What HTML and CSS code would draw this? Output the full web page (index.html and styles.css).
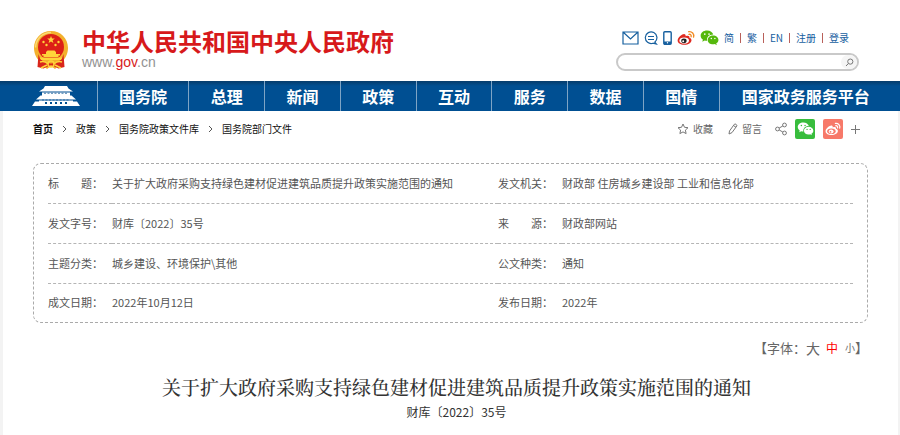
FILE: index.html
```html
<!DOCTYPE html>
<html lang="zh-CN">
<head>
<meta charset="utf-8">
<meta name="viewport" content="width=device-width, initial-scale=1">
<title>关于扩大政府采购支持绿色建材促进建筑品质提升政策实施范围的通知</title>
<link rel="stylesheet" href="styles.css">
</head>
<body>
<svg class="symbols" aria-hidden="true">
  <symbol id="wechat" viewBox="0 0 20 17">
    <path d="M7.4.5C3.5.5.6 2.9.6 6c0 1.800 1 3.200 2.400 4.200L2.400 12.400 4.900 11.100c.8.300 1.700.4 2.600.4-.8-3.600 2.300-6.700 6.500-6.600C13.400 2.300 10.800.5 7.400.5z"/>
    <path d="M13.800 5.800c-3.200 0-5.700 2.100-5.700 4.700s2.500 4.700 5.700 4.700c.7 0 1.300-.1 1.900-.3l2 1.200-.5-1.900c1.400-.9 2.300-2.200 2.300-3.700 0-2.600-2.500-4.700-5.700-4.700z"/>
    <g fill="var(--eye)"><circle cx="5" cy="4.300" r=".9"/><circle cx="9.500" cy="4.300" r=".9"/><circle cx="11.900" cy="9" r=".8"/><circle cx="15.700" cy="9" r=".8"/></g>
  </symbol>
  <symbol id="weibo" viewBox="0 0 20 17">
    <path d="M8.400 4.200C6.600 3.400 1 7.600.7 11c-.3 3 3.300 5.100 7.400 5.100 4.600 0 8-2.600 8-5.100 0-1.600-1.300-2.400-2.400-2.700.6-1.700-.9-3-4.100-1.800.3-1-.1-2-1.200-2.300z"/>
    <ellipse cx="8" cy="11.400" rx="5.300" ry="3.500" fill="var(--eye)"/>
    <ellipse cx="7.700" cy="11.600" rx="3" ry="2.600" fill="var(--iris)"/>
    <circle cx="6.900" cy="12" r="1.100" fill="var(--eye)"/>
    <g fill="none" stroke="var(--wave)" stroke-width="1.500" stroke-linecap="round"><path d="M13 1.500c3.600-.6 6.400 2.500 5.400 6"/><path d="M13.300 4.400c1.700-.3 2.900 1.100 2.400 2.700"/></g>
  </symbol>
</svg>

<header class="masthead">
  <a class="brand" href="#">
    <svg class="emblem" viewBox="0 0 36 40" aria-hidden="true">
      <path d="M18 1C8.200 1 1 8.400 1 18c0 5.700 2.500 10.500 6.200 13.600L6 37l5-1 3 3 4-3 4 3 3-3 5 1-1.200-5.400C32.500 28.500 35 23.700 35 18 35 8.400 27.800 1 18 1z" fill="#f3b12d"/>
      <path d="M18 2.500C9.500 2.500 2.800 9 2.600 17.500" fill="none" stroke="#fbd977" stroke-width="1.500"/>
      <circle cx="18" cy="17" r="13" fill="#dc1f17"/>
      <path d="M5.500 24c1.500 6 6 9.500 12.500 9.500S29 30 30.500 24l1 13-6 1.500L18 35l-7.500 3.500-6-1.500z" fill="#d9261b"/>
      <path d="m18 6 1 2.600h2.800l-2.200 1.700.8 2.700-2.400-1.600-2.400 1.600.8-2.700-2.200-1.700H17z" fill="#ffd43a"/>
      <g fill="#ffd43a"><circle cx="10.500" cy="12" r="1.200"/><circle cx="13.500" cy="15" r="1.200"/><circle cx="22.500" cy="15" r="1.200"/><circle cx="25.500" cy="12" r="1.200"/></g>
      <path d="m13 22 1.500-1.500h7L23 22v2h4v1.500h-1.500V27h-15v-1.500H9V24h4zM6.500 27.500h23L28 30H8z" fill="#ffd43a"/>
      <g fill="none" stroke="#ffd43a" stroke-width="1.500"><circle cx="18" cy="34" r="3"/><path d="M7 32c3-1 6 0 8 2M29 32c-3-1-6 0-8 2M8 38l6-3M28 38l-6-3"/></g>
    </svg>
    <span class="brand-text">
      <span class="brand-name">中华人民共和国中央人民政府</span>
      <span class="brand-url">www.<b>gov</b>.cn</span>
    </span>
  </a>
  <div class="tools">
    <nav class="links" aria-label="快捷入口">
      <a href="#" aria-label="邮箱"><svg width="17" height="14" viewBox="0 0 17 14" fill="none" stroke="#17609f" stroke-width="1.200"><path d="M1 1h15v12H1zM1 1l7.500 7L16 1"/></svg></a>
      <a href="#" aria-label="留言"><svg width="14" height="14" viewBox="0 0 14 14" fill="none" stroke="#17609f" stroke-width="1.200"><path d="M10.800 11.200A5.800 5.800 0 1 0 9 12.200l3.300.8zM4 5.500h6M4 8.500h6"/></svg></a>
      <a href="#" aria-label="手机"><svg width="9" height="14" viewBox="0 0 9 14"><rect x=".8" y=".8" width="7.400" height="12.400" rx="1" fill="#fff" stroke="#17609f" stroke-width="1.400"/><path d="M1 10.500h7V13H1z" fill="#17609f"/><circle cx="4.500" cy="11.800" r=".7" fill="#fff"/></svg></a>
      <a href="#" aria-label="微博"><svg class="weibo-color" width="18" height="16"><use href="#weibo"/></svg></a>
      <a href="#" aria-label="微信"><svg class="wechat-color" width="19" height="16"><use href="#wechat"/></svg></a>
      <span class="langs"><a href="#">简</a><i></i><a href="#">繁</a><i></i><a href="#">EN</a><i></i><a href="#">注册</a><i></i><a href="#">登录</a></span>
    </nav>
    <form class="search" role="search">
      <input type="search" aria-label="搜索">
      <button type="button" aria-label="搜索"><svg width="9" height="9" viewBox="0 0 9 9" fill="none" stroke="#777" stroke-width="1"><circle cx="5.300" cy="3.600" r="2.600"/><path d="M3.400 5.500 1 8"/></svg></button>
    </form>
  </div>
</header>

<nav class="mainnav" aria-label="主导航">
  <a href="#" aria-label="首页"><svg width="50" height="21" viewBox="0 0 50 21" fill="#fff"><path d="M14 0h22l1.500 2.500L42 5.500H8l4.500-3zM11 6.500h28v3H11zM9.500 9.500h31L45 13.500H5zM8 14.500h34v1.200H8zM4 15.500h42l3 4.500H1z"/><path d="M13 7.300h24M11 14h28" stroke="#004f92" stroke-width=".7" stroke-dasharray="2 1.500"/><path d="M14 18v-2h2v2zM19 18v-2h2v2zM24 18v-2h2v2zM29 18v-2h2v2zM34 18v-2h2v2z" fill="#004f92"/></svg></a>
  <a href="#">国务院</a>
  <a href="#">总理</a>
  <a href="#">新闻</a>
  <a href="#">政策</a>
  <a href="#">互动</a>
  <a href="#">服务</a>
  <a href="#">数据</a>
  <a href="#">国情</a>
  <a href="#">国家政务服务平台</a>
</nav>

<main class="page">
  <div class="bar">
    <nav class="crumbs" aria-label="面包屑">
      <a href="#"><b>首页</b></a><svg width="5" height="8" viewBox="0 0 5 8"><path d="m1 1 3 3-3 3"/></svg>
      <a href="#">政策</a><svg width="5" height="8" viewBox="0 0 5 8"><path d="m1 1 3 3-3 3"/></svg>
      <a href="#">国务院政策文件库</a><svg width="5" height="8" viewBox="0 0 5 8"><path d="m1 1 3 3-3 3"/></svg>
      <a href="#">国务院部门文件</a>
    </nav>
    <div class="actions">
      <button type="button" class="action"><svg width="12" height="12" viewBox="0 0 12 12"><path d="m6 1 1.500 3.300 3.500.4-2.600 2.400.7 3.500L6 8.900l-3.100 1.700.7-3.500L1 4.700l3.500-.4z"/></svg>收藏</button>
      <button type="button" class="action"><svg width="10" height="12" viewBox="0 0 10 12"><path d="m1 11 .5-3L6.300 1.300c.8-1 3.200.6 2.500 1.700L4 9.600zM5.500 2.500 8 4.300"/></svg>留言</button>
      <div class="share">
        <svg class="share-icon" width="12" height="14" viewBox="0 0 12 14" role="img" aria-label="分享"><circle cx="2.500" cy="7" r="1.900"/><circle cx="9.500" cy="3" r="1.900"/><circle cx="9.500" cy="11" r="1.900"/><path d="m4.200 6 3.600-2M4.200 8l3.600 2"/></svg>
        <button type="button" class="tile tile-wechat" aria-label="分享到微信"><svg width="17" height="14"><use href="#wechat"/></svg></button>
        <button type="button" class="tile tile-weibo" aria-label="分享到微博"><svg width="16" height="14"><use href="#weibo"/></svg></button>
        <button type="button" class="more" aria-label="更多"><svg width="9" height="9" viewBox="0 0 9 9"><path d="M4.500 0v9M0 4.500h9"/></svg></button>
      </div>
    </div>
  </div>

  <div class="info">
    <table>
      <tbody>
        <tr><th scope="row"><span class="spread"><span>标</span><span>题：</span></span></th><td>关于扩大政府采购支持绿色建材促进建筑品质提升政策实施范围的通知</td><th scope="row">发文机关：</th><td>财政部 住房城乡建设部 工业和信息化部</td></tr>
        <tr><th scope="row">发文字号：</th><td>财库〔2022〕35号</td><th scope="row"><span class="spread"><span>来</span><span>源：</span></span></th><td>财政部网站</td></tr>
        <tr><th scope="row">主题分类：</th><td>城乡建设、环境保护\其他</td><th scope="row">公文种类：</th><td>通知</td></tr>
        <tr><th scope="row">成文日期：</th><td>2022年10月12日</td><th scope="row">发布日期：</th><td>2022年</td></tr>
      </tbody>
    </table>
  </div>

  <div class="sizes">【字体：<button type="button" class="large">大</button><button type="button" class="medium">中</button><button type="button" class="small">小</button>】</div>

  <article>
    <h1>关于扩大政府采购支持绿色建材促进建筑品质提升政策实施范围的通知</h1>
    <p class="docno">财库〔2022〕35号</p>
  </article>
</main>
</body>
</html>
```
FILE: styles.css
```css
* { box-sizing: border-box; }

body {
  margin: 0;
  background: #f3f3f3;
  color: #333;
  font: 10px/16px "Noto Sans CJK SC", sans-serif;
}

a { color: inherit; text-decoration: none; }
button { padding: 0; border: 0; background: none; color: inherit; font: inherit; cursor: pointer; }
svg { display: block; }
.symbols { position: absolute; width: 0; height: 0; }

.masthead {
  display: flex;
  justify-content: space-between;
  padding: 28px 41px 10px 33px;
  background: #fff;
}
.brand { display: flex; gap: 13px; }
.emblem { width: 36px; height: 40px; margin-top: 2px; }
.brand-text { display: flex; flex-direction: column; }
.brand-name { color: #d7191b; font-size: 24px; font-weight: 700; line-height: 26px; white-space: nowrap; }
.brand-url { color: #929292; font: 14px/16px "Liberation Sans", sans-serif; }
.brand-url b { color: #d7191b; font-weight: 400; }

.tools { width: 243px; }
.links { display: flex; align-items: center; height: 20px; gap: 5px; padding-left: 6px; }
.weibo-color { fill: #df2a20; --eye: #fff; --iris: #222; --wave: #f28a22; }
.wechat-color { fill: #55b80c; --eye: #fff; }
.langs { display: flex; flex: 1; align-items: center; justify-content: space-between; padding-right: 10px; color: #17609f; }
.langs i { width: 1px; height: 10px; background: #b9605a; }

.search {
  display: flex;
  align-items: center;
  height: 18px;
  margin-top: 5px;
  border: 2px solid #c9c9c9;
  border-radius: 9px;
  overflow: hidden;
}
.search input { flex: 1; min-width: 0; height: 14px; border: 0; outline: 0; padding: 0 8px; background: none; font: inherit; }
.search button { display: grid; place-items: center; width: 16px; height: 14px; background: #f5f5f5; border-radius: 7px; }

.mainnav {
  display: grid;
  grid-template-columns: 98fr 92fr repeat(7, 76fr) 181fr;
  height: 30px;
  background: linear-gradient(#063c6b, #004f92 5px);
  color: #fff;
  font-size: 16px;
  font-weight: 700;
}
.mainnav a { display: grid; place-items: center; border-right: 1px solid #7ea4c5; white-space: nowrap; }
.mainnav a:first-child { padding-left: 16px; }
.mainnav a:last-child { border-right: 0; padding-right: 8px; }

.page { margin: 0 2px 0 3px; padding: 0 30px 24px; background: #fff; }

.bar { display: flex; justify-content: space-between; align-items: center; height: 36px; }
.crumbs { display: flex; align-items: center; gap: 9px; color: #111; }
.crumbs svg { fill: none; stroke: #555; stroke-width: 1; }
.actions { display: flex; align-items: center; gap: 15px; padding-right: 8px; color: #666; }
.action { display: flex; align-items: center; gap: 4px; }
.actions .action svg, .share-icon, .more svg { fill: none; stroke: #777; stroke-width: 1; }
.share { display: flex; align-items: center; gap: 8px; margin-left: -2px; }
.tile { display: grid; place-items: center; width: 20px; height: 20px; border-radius: 2px; fill: #fff; }
.tile-wechat { background: #38bd3d; --eye: #38bd3d; }
.tile-weibo { background: #f77969; --eye: #f77969; --iris: #fff; --wave: #fff; }

.info { margin-top: 16px; padding: 0 14px; border: 1px dashed #aaa; border-radius: 8px; }
table { width: 100%; table-layout: fixed; border-spacing: 0; color: #555; font-size: 11px; }
th, td { height: 40px; padding: 0 0 2px; border-bottom: 1px dashed #b5b5b5; text-align: left; font-weight: 400; white-space: nowrap; }
tr:last-child > * { height: 38px; border-bottom: 0; }
th { width: 64px; }
td:last-child { width: 291px; }
.spread { display: flex; justify-content: space-between; width: 55px; }

.sizes { display: flex; justify-content: flex-end; align-items: center; height: 20px; margin-top: 15px; color: #666; font-size: 13px; }
.large { margin-right: 6px; font-size: 14px; }
.medium { margin-right: 7px; color: #f00; font-size: 12px; }
.small { font-size: 10px; }

article { margin-top: 15px; padding-left: 12px; text-align: center; }
h1 { margin: 0; font: 500 19px/28px "Noto Serif CJK SC", "Noto Sans CJK SC", serif; }
.docno { margin: 2px 0 0; font: 12px/18px "Noto Sans CJK SC", sans-serif; }
```
